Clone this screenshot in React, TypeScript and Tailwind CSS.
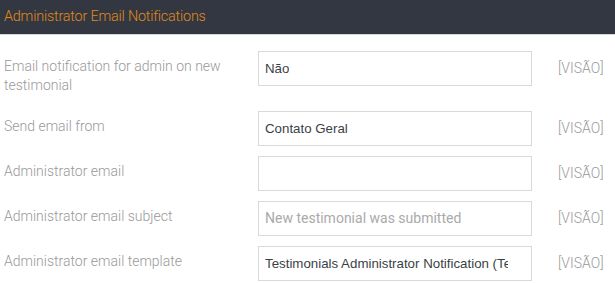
import React from "react";

type Row = {
  label: string;
  value?: string;
  placeholder?: string;
  kind: "select" | "input";
};

const rows: Row[] = [
  { label: "Email notification for admin on new testimonial", value: "Não", kind: "select" },
  { label: "Send email from", value: "Contato Geral", kind: "select" },
  { label: "Administrator email", value: "", kind: "input" },
  { label: "Administrator email subject", placeholder: "New testimonial was submitted", kind: "input" },
  { label: "Administrator email template", value: "Testimonials Administrator Notification (Testimonials)", kind: "select" },
];

export default function App() {
  return (
    <div className="w-[615px] h-[283px] bg-white overflow-hidden font-['Roboto',sans-serif]">
      <div className="h-[35px] bg-[#323741] border-b border-[#d6d8dc] flex items-center px-[4px]">
        <h3 className="text-[14.4px] font-light text-[#e08a1b] tracking-[-0.2px]">
          Administrator Email Notifications
        </h3>
      </div>

      <div className="pt-[16px] flex flex-col gap-[10px]">
        {rows.map((row) => (
          <div key={row.label} className="flex items-start">
            <label className="w-[258px] pl-[4px] pr-[20px] py-[6px] text-[14px] leading-[19px] font-light text-[#999999]">
              {row.label}
            </label>
            <div className="w-[274px] h-[35px] border border-[#d9d9d9] bg-white flex items-center pl-[6px] pr-[23px] overflow-hidden">
              {row.kind === "select" ? (
                <span className="block min-w-0 whitespace-nowrap overflow-hidden text-[13.3px] text-[#3a3f47] font-['Liberation_Sans',Arial,sans-serif]">
                  {row.value}
                </span>
              ) : (
                <input
                  type="text"
                  readOnly
                  defaultValue={row.value}
                  placeholder={row.placeholder}
                  className="w-full bg-transparent outline-none text-[14px] text-[#3a3f47] placeholder:text-[#aaaaaa] font-['Roboto',sans-serif]"
                />
              )}
            </div>
            <div className="h-[35px] flex items-center ml-[26px] text-[14px] font-light text-[#9a9a9a]">
              [VISÃO]
            </div>
          </div>
        ))}
      </div>
    </div>
  );
}
